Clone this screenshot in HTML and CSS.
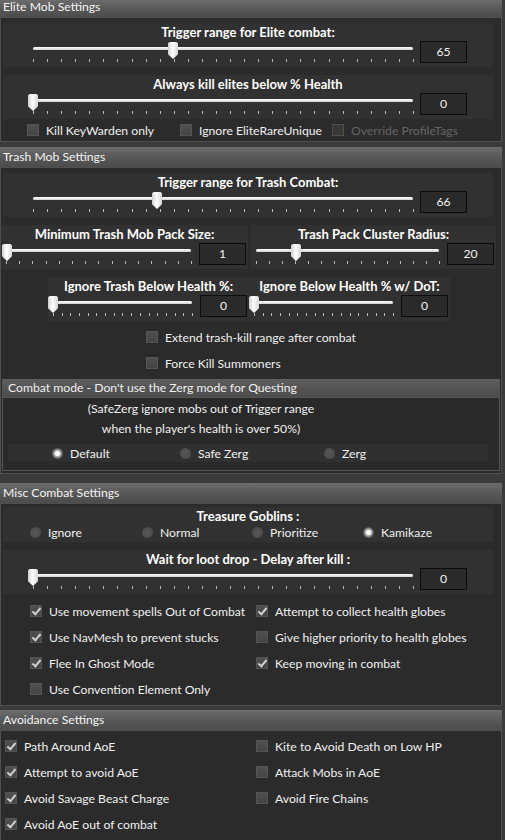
FILE: index.html
```html
<!DOCTYPE html>
<html lang="en">
<head>
  <meta charset="UTF-8">
  <meta name="viewport" content="width=device-width, initial-scale=1.0">
  <title>Combat Settings</title>
  <link rel="stylesheet" href="styles.css">
</head>
<body>

<!-- Elite -->
<div class="section first">
  <div class="hdr">Elite Mob Settings</div>
  <div class="panel">
    <div class="group">
      <div class="title">Trigger range for Elite combat:</div>
      <div class="slider-row">
        <div class="slider s-wide"><div class="track"></div><div class="ticks"></div><span class="thumb" style="left:140px"></span></div>
        <div class="val">65</div>
      </div>
    </div>
    <div class="group last">
      <div class="title">Always kill elites below % Health</div>
      <div class="slider-row">
        <div class="slider s-wide"><div class="track"></div><div class="ticks"></div><span class="thumb" style="left:0px"></span></div>
        <div class="val">0</div>
      </div>
    </div>
    <div class="elite-checks">
      <label class="check"><span class="box"></span>Kill KeyWarden only</label>
      <label class="check"><span class="box"></span>Ignore EliteRareUnique</label>
      <label class="check disabled"><span class="box"></span>Override ProfileTags</label>
    </div>
  </div>
</div>

<!-- Trash -->
<div class="section trash">
  <div class="hdr">Trash Mob Settings</div>
  <div class="panel">
    <div class="group">
      <div class="title">Trigger range for Trash Combat:</div>
      <div class="slider-row">
        <div class="slider s-wide"><div class="track"></div><div class="ticks"></div><span class="thumb" style="left:124px"></span></div>
        <div class="val">66</div>
      </div>
    </div>
    <div class="pair">
      <div class="group half">
        <div class="title">Minimum Trash Mob Pack Size:</div>
        <div class="slider-row">
          <div class="slider s-mid"><div class="track"></div><div class="ticks"></div><span class="thumb" style="left:1px"></span></div>
          <div class="val">1</div>
        </div>
      </div>
      <div class="group half right">
        <div class="title">Trash Pack Cluster Radius:</div>
        <div class="slider-row">
          <div class="slider s-mid2"><div class="track"></div><div class="ticks"></div><span class="thumb" style="left:40px"></span></div>
          <div class="val">20</div>
        </div>
      </div>
    </div>
    <div class="pair inset">
      <div class="group half last">
        <div class="title">Ignore Trash Below Health %:</div>
        <div class="slider-row">
          <div class="slider s-short"><div class="track"></div><div class="ticks"></div><span class="thumb" style="left:0px"></span></div>
          <div class="val">0</div>
        </div>
      </div>
      <div class="group half last">
        <div class="title">Ignore Below Health % w/ DoT:</div>
        <div class="slider-row">
          <div class="slider s-short"><div class="track"></div><div class="ticks"></div><span class="thumb" style="left:0px"></span></div>
          <div class="val">0</div>
        </div>
      </div>
    </div>
    <div class="trash-checks">
      <label class="check"><span class="box"></span>Extend trash-kill range after combat</label>
      <label class="check"><span class="box"></span>Force Kill Summoners</label>
    </div>

    <div class="groupbox">
      <div class="gb-hdr">Combat mode - Don't use the Zerg mode for Questing</div>
      <div class="gb-body">
        <div class="note">(SafeZerg ignore mobs out of Trigger range</div>
        <div class="note">when the player's health is over 50%)</div>
        <div class="mode-row">
          <label class="opt"><span class="radio on"></span>Default</label>
          <label class="opt"><span class="radio"></span>Safe Zerg</label>
          <label class="opt"><span class="radio"></span>Zerg</label>
        </div>
      </div>
    </div>
  </div>
</div>

<!-- Misc -->
<div class="section misc">
  <div class="hdr">Misc Combat Settings</div>
  <div class="panel">
    <div class="group goblins">
      <div class="title">Treasure Goblins :</div>
      <div class="goblin-row">
        <label class="opt"><span class="radio"></span>Ignore</label>
        <label class="opt"><span class="radio"></span>Normal</label>
        <label class="opt"><span class="radio"></span>Prioritize</label>
        <label class="opt"><span class="radio on"></span>Kamikaze</label>
      </div>
    </div>
    <div class="group loot">
      <div class="title">Wait for loot drop - Delay after kill :</div>
      <div class="slider-row">
        <div class="slider s-wide"><div class="track"></div><div class="ticks"></div><span class="thumb" style="left:0px"></span></div>
        <div class="val">0</div>
      </div>
    </div>
    <div class="check-grid misc-grid">
      <label class="check"><span class="box on"></span>Use movement spells Out of Combat</label>
      <label class="check"><span class="box on"></span>Attempt to collect health globes</label>
      <label class="check"><span class="box on"></span>Use NavMesh to prevent stucks</label>
      <label class="check"><span class="box"></span>Give higher priority to health globes</label>
      <label class="check"><span class="box on"></span>Flee In Ghost Mode</label>
      <label class="check"><span class="box on"></span>Keep moving in combat</label>
      <label class="check"><span class="box"></span>Use Convention Element Only</label>
    </div>
  </div>
</div>

<!-- Avoidance -->
<div class="section avoid">
  <div class="hdr">Avoidance Settings</div>
  <div class="panel">
    <div class="check-grid avoid-grid">
      <label class="check"><span class="box on"></span>Path Around AoE</label>
      <label class="check"><span class="box"></span>Kite to Avoid Death on Low HP</label>
      <label class="check"><span class="box on"></span>Attempt to avoid AoE</label>
      <label class="check"><span class="box"></span>Attack Mobs in AoE</label>
      <label class="check"><span class="box on"></span>Avoid Savage Beast Charge</label>
      <label class="check"><span class="box"></span>Avoid Fire Chains</label>
      <label class="check"><span class="box on"></span>Avoid AoE out of combat</label>
    </div>
  </div>
</div>

</body>
</html>
```

FILE: styles.css
```css
:root {
  --page: #3b3b3b;
  --panel: #2b2b2b;
  --group: #313131;
  --line: #4f4f4f;
  --text: #f0f0f0;
  --dim: #656565;
}
body {
  font-family: Lato, 'Liberation Sans', sans-serif;
  font-size: 12.2px;
  background-color: var(--page);
  color: var(--text);
  margin: 0;
  padding: 0;
  width: 505px;
  overflow: hidden;
}
label {
  cursor: default;
}

/* sections */
.section {
  margin-top: 5px;
  width: 502px;
}
.section.first {
  margin-top: 0;
}
.section.misc {
  margin-top: 9px;
}
.section.avoid {
  margin-top: 4px;
}
.hdr {
  height: 20px;
  line-height: 20px;
  padding-left: 3px;
  background: linear-gradient(#6c6c6c, #575757 55%, #4c4c4c);
  color: #f4f4f4;
}
.first .hdr {
  height: 17px;
  line-height: 14px;
}
.panel {
  background-color: var(--panel);
  border: 1px solid var(--line);
  padding: 5px 0 0 0;
}
.trash .panel {
  padding-bottom: 2px;
}
.misc .panel {
  padding: 3px 0 3px 0;
}
.avoid .panel {
  padding: 2px 0 10px 0;
}

/* slider groups */
.group {
  background-color: var(--group);
  margin: 0 8px 8px 2px;
  padding: 1px 0 4px 0;
}
.group.last {
  margin-bottom: 0;
}
.title {
  height: 16px;
  line-height: 16px;
  text-align: center;
  font-weight: bold;
  font-size: 13px;
  color: #fff;
}
.slider-row {
  display: flex;
  margin-top: 1px;
  padding-left: 30px;
}
.slider {
  position: relative;
  height: 22px;
  margin-right: 7px;
}
.s-wide { width: 380px; --n: 27; }
.s-mid { width: 185px; --n: 14; }
.s-mid2 { width: 183px; --n: 14; }
.s-short { width: 139px; --n: 16; }
.track {
  margin-top: 6px;
  height: 3px;
  border-radius: 2px;
  background: linear-gradient(#ffffff, #d2d2d2);
}
.ticks {
  margin-top: 9px;
  width: calc(100% + 1px);
  height: 3px;
  background: repeating-linear-gradient(to right, #b8b8b8 0 1px, transparent 1px calc((100% - 1px) / var(--n)));
}
.thumb {
  position: absolute;
  top: 1px;
  width: 10px;
  height: 17px;
  margin-left: -5px;
  background: linear-gradient(to right, #cfcfcf, #ffffff 45%, #d8d8d8);
  clip-path: polygon(15% 0, 85% 0, 100% 8%, 100% 72%, 50% 100%, 0 72%, 0 8%);
}
.val {
  width: 45px;
  height: 20px;
  line-height: 20px;
  border: 1px solid #0c0c0c;
  background-color: #2a2a2a;
  text-align: center;
}

/* paired groups */
.pair {
  display: flex;
}
.pair .group.half {
  margin: 0 0 8px 0;
}
.pair .group.half.last {
  margin-bottom: 0;
}
.pair .right {
  margin-left: 3px !important;
}
.pair.inset {
  padding-left: 47px;
}
.half .slider-row {
  padding: 0 2px 0 5px;
}
.half .slider {
  margin-right: 8px;
}

/* checkboxes */
.check {
  display: flex;
  align-items: center;
  height: 26px;
  white-space: nowrap;
}
.box {
  flex: none;
  width: 12px;
  height: 12px;
  margin-right: 7px;
  background: linear-gradient(#4f4f4f, #454545);
  border: 1px solid #555;
  box-sizing: border-box;
  position: relative;
}
.box.on::after {
  content: "";
  position: absolute;
  left: 3px;
  top: 0px;
  width: 3px;
  height: 7px;
  border: solid #cfcfcf;
  border-width: 0 2px 2px 0;
  transform: rotate(40deg);
}
.check.disabled {
  color: var(--dim);
}
.check.disabled .box {
  background: #383838;
  border-color: #505050;
}
.elite-checks {
  display: grid;
  grid-template-columns: 153px 152px auto;
  padding-left: 26px;
}
.elite-checks .check {
  height: 22px;
}
.trash-checks {
  margin: 3px 0 0 145px;
}
.check-grid {
  display: grid;
}
.misc-grid {
  grid-template-columns: 226px auto;
  padding-left: 29px;
}
.avoid-grid {
  grid-template-columns: 251px auto;
  padding-left: 4px;
}

/* radios */
.opt {
  display: flex;
  align-items: center;
  white-space: nowrap;
}
.radio {
  flex: none;
  width: 11px;
  height: 11px;
  margin-right: 7px;
  border-radius: 50%;
  background: radial-gradient(circle, #575757, #474747);
}
.radio.on {
  background: radial-gradient(circle, #ffffff 0 2px, #b5b5b5 3px, #606060 5px, #4a4a4a 6px);
}

/* combat mode group box */
.groupbox {
  margin: 3px 1px 0 1px;
  border: 1px solid #555;
  border-top: 0;
}
.gb-hdr {
  height: 18px;
  line-height: 18px;
  padding-left: 5px;
  background: linear-gradient(#5e5e5e, #4c4c4c);
  border-bottom: 1px solid #555;
}
.gb-body {
  background-color: #292929;
  padding: 1px 0 8px 0;
}
.note {
  width: 396px;
  height: 20px;
  line-height: 20px;
  text-align: center;
}
.mode-row {
  display: grid;
  grid-template-columns: 128px 144px auto;
  margin: 5px 11px 0 5px;
  height: 18px;
  padding-left: 44px;
  background-color: #303030;
}

/* goblins */
.goblins {
  padding: 1px 0 2px 0;
  margin-bottom: 8px;
}
.goblin-row {
  display: grid;
  grid-template-columns: 112px 110px 111px auto;
  padding-left: 27px;
  height: 16px;
}
.loot {
  margin-bottom: 4px;
}
```
